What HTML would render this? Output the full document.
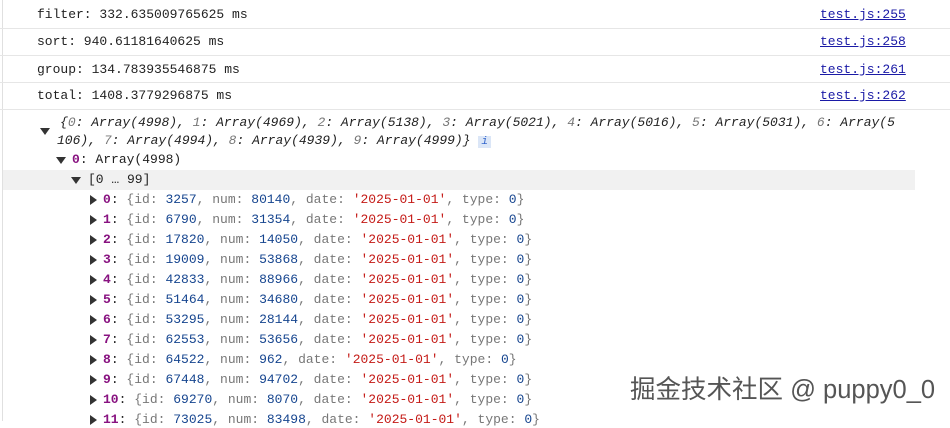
<!DOCTYPE html>
<html><head><meta charset="utf-8"><style>
body{margin:0;width:950px;height:421px;overflow:hidden;background:#fff;font-family:"Liberation Mono",monospace;font-size:13px;color:#222;position:relative}
.l{position:absolute;left:0;right:0;height:1px;background:#e6e6e6}
.t{position:absolute;white-space:pre;line-height:16px}
a{position:absolute;left:820px;color:#1a1aa6;text-decoration:underline;line-height:16px}
.tri{position:absolute;width:0;height:0}
.dn{border-left:5px solid transparent;border-right:5px solid transparent;border-top:7px solid #333}
.rt{border-top:5px solid transparent;border-bottom:5px solid transparent;border-left:7px solid #333}
.k{color:#881280}.g{color:#777}.b{color:#16458f}.s{color:#c41a16}.i{font-style:italic}
</style></head><body>
<div style="position:absolute;left:2px;top:0;bottom:0;width:1px;background:#e0e0e0"></div>
<div class="t" style="left:37px;top:7px">filter: 332.635009765625 ms</div><a style="top:7px">test.js:255</a>
<div class="l" style="top:28px"></div>
<div class="t" style="left:37px;top:34px">sort: 940.61181640625 ms</div><a style="top:34px">test.js:258</a>
<div class="l" style="top:55px"></div>
<div class="t" style="left:37px;top:62px">group: 134.783935546875 ms</div><a style="top:62px">test.js:261</a>
<div class="l" style="top:82px"></div>
<div class="t" style="left:37px;top:88px">total: 1408.3779296875 ms</div><a style="top:88px">test.js:262</a>
<div class="l" style="top:109px"></div>
<div class="tri dn" style="left:40px;top:128px"></div>
<div class="t i" style="left:60px;top:115px">{<span class="g">0</span>: Array(4998), <span class="g">1</span>: Array(4969), <span class="g">2</span>: Array(5138), <span class="g">3</span>: Array(5021), <span class="g">4</span>: Array(5016), <span class="g">5</span>: Array(5031), <span class="g">6</span>: Array(5</div>
<div class="t i" style="left:57px;top:133px">106), <span class="g">7</span>: Array(4994), <span class="g">8</span>: Array(4939), <span class="g">9</span>: Array(4999)} <span style="background:#dbe6f7;color:#36c;font-size:11px;padding:0 3px">i</span></div>
<div class="tri dn" style="left:56px;top:157px"></div>
<div class="t" style="left:72px;top:152px"><b class="k">0</b>: Array(4998)</div>
<div style="position:absolute;left:3px;top:170px;width:912px;height:20px;background:#f1f1f1"></div>
<div class="tri dn" style="left:71px;top:177px"></div>
<div class="t" style="left:88px;top:172px">[0 … 99]</div>
<div id="e"></div>
<script>
var d=[[3257,80140],[6790,31354],[17820,14050],[19009,53868],[42833,88966],[51464,34680],[53295,28144],[62553,53656],[64522,962],[67448,94702],[69270,8070],[73025,83498]];
var h='';d.forEach(function(r,i){var y=192+i*20;
h+='<div class="tri rt" style="left:90px;top:'+(y+3)+'px"></div><div class="t" style="left:103px;top:'+y+'px"><b class="k">'+i+'</b>: <span class="g">{id: </span><span class="b">'+r[0]+'</span><span class="g">, num: </span><span class="b">'+r[1]+'</span><span class="g">, date: </span><span class="s">\'2025-01-01\'</span><span class="g">, type: </span><span class="b">0</span><span class="g">}</span></div>';});
document.getElementById('e').innerHTML=h;
</script>
<div class="t" style="left:630px;top:374px;font-family:'Liberation Sans','Noto Sans CJK SC',sans-serif;font-size:25.5px;line-height:32px;color:#555;text-shadow:0 0 2px #fff">掘金技术社区 @ puppy0_0</div>
</body></html>
